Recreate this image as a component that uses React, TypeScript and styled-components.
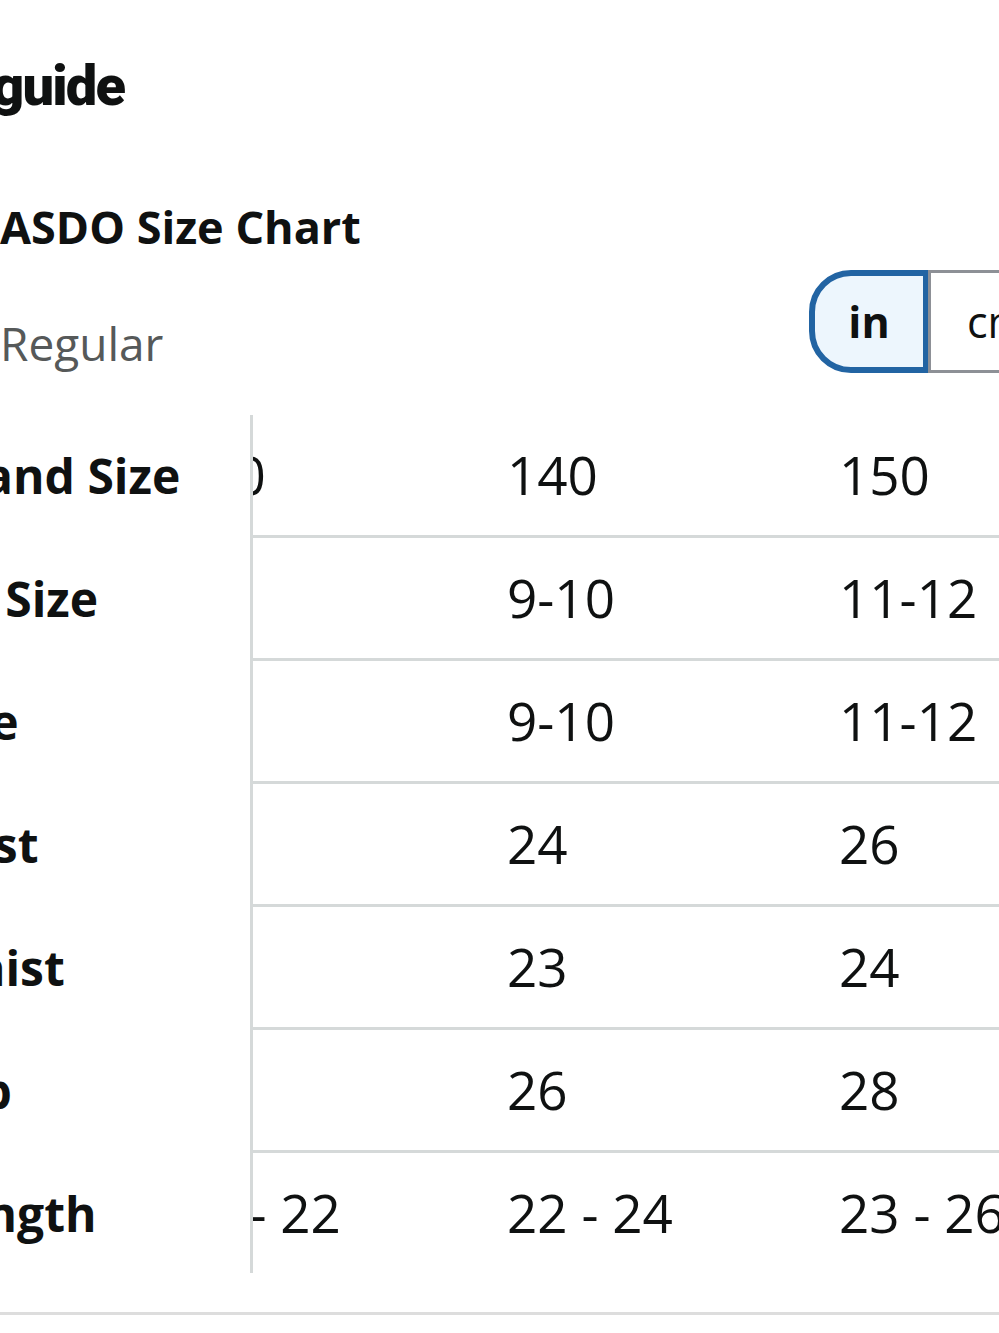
import React from "react";
import styled, { createGlobalStyle } from "styled-components";

const GlobalStyle = createGlobalStyle`
  html, body {
    margin: 0;
    padding: 0;
    background: #ffffff;
  }
  body {
    font-family: "Open Sans", "Noto Sans", sans-serif;
    color: #0f1111;
    overflow: hidden;
  }
`;

const Page = styled.div`
  width: 999px;
  height: 1333px;
  overflow: hidden;
  background: #fff;
`;

const Heading = styled.h1`
  margin: 50px 0 0 -8px;
  font-family: Roboto, "Noto Sans", sans-serif;
  font-weight: 900;
  font-size: 56px;
  line-height: 72px;
  letter-spacing: -1.8px;
  white-space: nowrap;
`;

const ChartTitle = styled.h2`
  margin: 74px 0 0 0;
  font-size: 45px;
  font-weight: 700;
  line-height: 62px;
  white-space: nowrap;
`;

const FitRow = styled.div`
  display: flex;
  align-items: flex-end;
  justify-content: space-between;
  margin-top: 12px;
`;

const FitLabel = styled.span`
  font-size: 46px;
  line-height: 62px;
  color: #565959;
  margin-bottom: -1px;
`;

const UnitToggle = styled.div`
  display: flex;
  margin-right: -120px;
`;

const UnitButton = styled.div<{ $active?: boolean }>`
  box-sizing: border-box;
  height: 103px;
  width: ${({ $active }) => ($active ? "120px" : "191px")};
  display: flex;
  align-items: center;
  justify-content: ${({ $active }) => ($active ? "center" : "flex-start")};
  padding-left: ${({ $active }) => ($active ? "0" : "36px")};
  font-size: 43px;
  font-weight: ${({ $active }) => ($active ? 700 : 400)};
  background: ${({ $active }) => ($active ? "#edf6fd" : "#fff")};
  border: ${({ $active }) =>
    $active ? "6px solid #2264a3" : "3px solid #8d9096"};
  border-radius: ${({ $active }) => ($active ? "42px 0 0 42px" : "0")};
  margin-left: ${({ $active }) => ($active ? "0" : "-1px")};
`;

const Table = styled.div`
  margin-top: 42px;
  display: flex;
  flex-direction: column;
`;

const Row = styled.div`
  display: flex;
`;

const LabelCell = styled.div<{ $last?: boolean }>`
  box-sizing: border-box;
  width: 253px;
  flex-shrink: 0;
  border-right: 3px solid #d5d9d9;
  overflow: hidden;
  display: flex;
  align-items: center;
  padding-bottom: ${({ $last }) => ($last ? "0" : "3px")};
  background: #fff;
`;

const LabelText = styled.span`
  margin-left: -70px;
  font-size: 48px;
  font-weight: 700;
  white-space: nowrap;
`;

const Track = styled.div<{ $last?: boolean }>`
  flex: 1;
  height: 120px;
  overflow: hidden;
  border-bottom: ${({ $last }) => ($last ? "none" : "3px solid #d5d9d9")};
`;

const TrackInner = styled.div`
  display: flex;
  margin-left: -78px;
  height: 100%;
`;

const ValueCell = styled.div`
  width: 332px;
  flex-shrink: 0;
  font-size: 53px;
  line-height: 120px;
  white-space: pre;
`;

const BottomRule = styled.div`
  margin-top: 39px;
  height: 3px;
  background: #dddddd;
`;

const rows: { label: string; values: string[] }[] = [
  { label: "Brand Size", values: ["130", "140", "150"] },
  { label: "US Size", values: ["7-8", "9-10", "11-12"] },
  { label: "Age", values: ["7-8", "9-10", "11-12"] },
  { label: "Bust", values: ["22", "24", "26"] },
  { label: "Waist", values: ["22", "23", "24"] },
  { label: "Hip", values: ["24", "26", "28"] },
  { label: "Length", values: ["20 - 22", "22 - 24", "23 - 26"] },
];

export default function App() {
  return (
    <Page>
      <GlobalStyle />
      <Heading>guide</Heading>
      <ChartTitle>ASDO Size Chart</ChartTitle>
      <FitRow>
        <FitLabel>Regular</FitLabel>
        <UnitToggle>
          <UnitButton $active>in</UnitButton>
          <UnitButton>cm</UnitButton>
        </UnitToggle>
      </FitRow>
      <Table>
        {rows.map((row, i) => {
          const last = i === rows.length - 1;
          return (
            <Row key={row.label}>
              <LabelCell $last={last}>
                <LabelText>{row.label}</LabelText>
              </LabelCell>
              <Track $last={last}>
                <TrackInner>
                  {row.values.map((v, j) => (
                    <ValueCell key={j}>{v}</ValueCell>
                  ))}
                </TrackInner>
              </Track>
            </Row>
          );
        })}
      </Table>
      <BottomRule />
    </Page>
  );
}
